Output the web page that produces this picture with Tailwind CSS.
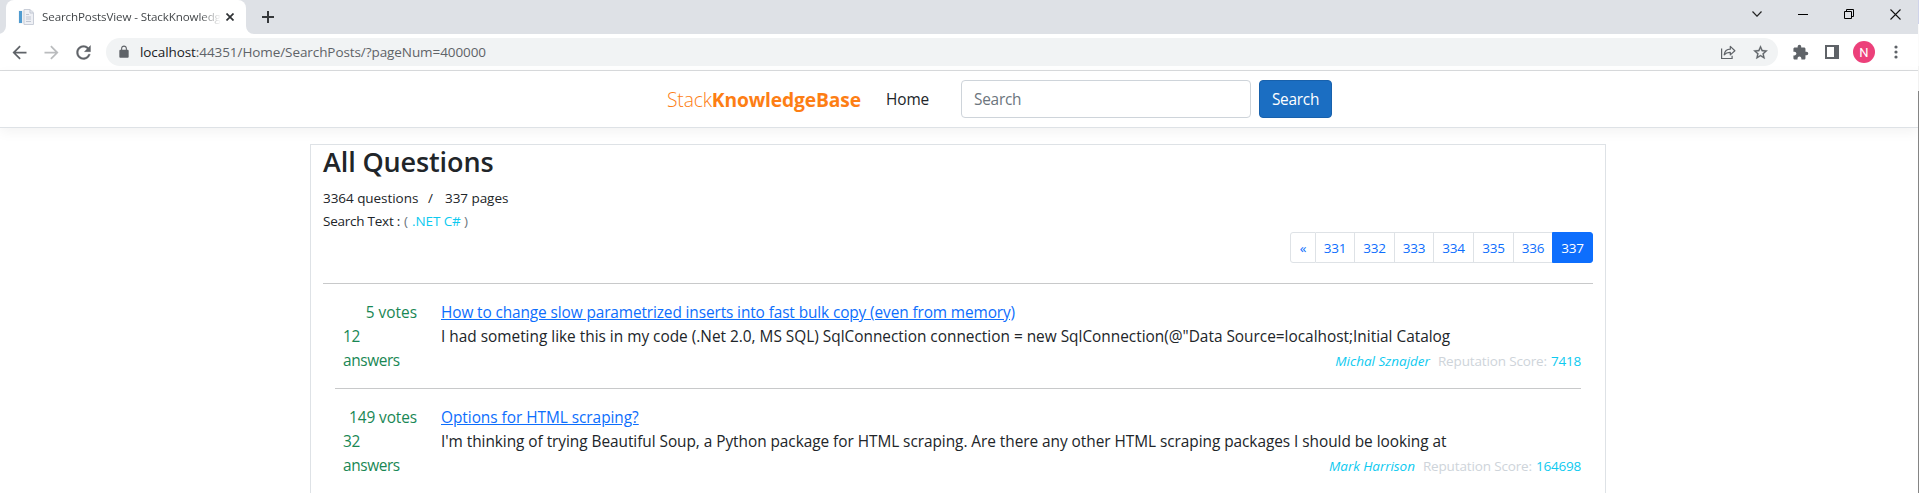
<!DOCTYPE html>
<html lang="en">
<head>
<meta charset="utf-8">
<title>SearchPostsView - StackKnowledgeBase</title>
<script src="https://cdn.jsdelivr.net/npm/@tailwindcss/browser@4"></script>
</head>
<body class="bg-white font-['Open_Sans','Noto_Sans',sans-serif] text-[15.4px] leading-6 text-[#212529]">
<div class="relative flex h-[493px] w-[1919px] flex-col overflow-hidden pr-px">

  <!-- Tab strip -->
  <div class="flex h-[34px] shrink-0 bg-[#dee1e6] pl-[6px]">
    <div class="relative flex w-[240px] items-center rounded-t-lg bg-white pl-3">
      <svg class="absolute -left-2 bottom-0 size-2" viewBox="0 0 8 8"><path d="M8 0v8H0a8 8 0 0 0 8-8z" fill="#fff"/></svg>
      <svg class="absolute -right-2 bottom-0 size-2" viewBox="0 0 8 8"><path d="M0 0v8h8a8 8 0 0 1-8-8z" fill="#fff"/></svg>
      <svg class="size-4 shrink-0" viewBox="0 0 16 16">
        <rect x=".5" y="1.5" width="15" height="13" fill="#eceff3"/>
        <rect x="1" y="2" width="3" height="12" fill="#4f9bd0"/>
        <path d="M6 .5h6l3.500 3.500v11.500H6z" fill="#eef0f5" stroke="#c9ced8"/>
        <path d="M12 .5V4h3.500M8 5.500h3M8 8h5M8 10h5M8 12.500h5" fill="none" stroke="#c0c6d2"/>
      </svg>
      <span class="ml-2 bg-gradient-to-r from-[#3c4043] from-88% to-[#3c4043]/0 bg-clip-text text-[11.6px] leading-4 tracking-[-0.12px] whitespace-nowrap text-transparent">SearchPostsView - StackKnowledg</span>
      <svg class="absolute top-[13px] left-[220px] size-2" viewBox="0 0 8 8"><path d="M.5.500l7 7M7.500.500l-7 7" stroke="#2f3235" stroke-width="1.700"/></svg>
    </div>
    <svg class="mt-[11px] ml-4 size-3" viewBox="0 0 12 12"><path d="M6 0v12M0 6h12" stroke="#35383b" stroke-width="2"/></svg>
    <div class="ml-auto flex h-7">
      <div class="flex w-[46px] items-center justify-center"><svg class="h-[6px] w-[10px]" viewBox="0 0 10 6"><path d="M.5.500L5 5.200 9.500.500" fill="none" stroke="#222" stroke-width="1.200"/></svg></div>
      <div class="flex w-[46px] items-center justify-center pt-px"><div class="h-px w-[10px] bg-black"></div></div>
      <div class="flex w-[46px] items-center justify-center"><svg class="size-[10px]" viewBox="0 0 10 10"><path d="M.5 2.500h7v7h-7zM2.500 2.500v-2h7v7h-2" fill="none" stroke="#000"/></svg></div>
      <div class="flex w-[46px] items-center justify-center"><svg class="size-[11px]" viewBox="0 0 11 11"><path d="M.5.500l10 10M10.500.500l-10 10" stroke="#111" stroke-width="1.100"/></svg></div>
    </div>
  </div>

  <!-- Toolbar -->
  <div class="flex h-[37px] shrink-0 items-center border-b border-[#d9dbdd] bg-white pl-1 text-[#5f6368]">
    <div class="flex w-8 justify-center pr-px"><svg class="size-[21px]" viewBox="0 0 24 24" fill="currentColor"><path d="M20 11H7.830l5.590-5.590L12 4l-8 8 8 8 1.410-1.410L7.830 13H20v-2z"/></svg></div>
    <div class="flex w-8 justify-center pr-px text-[#babcbe]"><svg class="size-[21px]" viewBox="0 0 24 24" fill="currentColor"><path d="M12 4l-1.410 1.410L16.170 11H4v2h12.170l-5.580 5.590L12 20l8-8z"/></svg></div>
    <div class="flex w-8 justify-center pr-px"><svg class="size-[21px]" viewBox="0 0 24 24" fill="currentColor" stroke="currentColor" stroke-width=".4"><path d="M17.650 6.350C16.200 4.900 14.210 4 12 4c-4.420 0-7.990 3.580-7.990 8s3.570 8 7.990 8c3.730 0 6.840-2.550 7.730-6h-2.080c-.82 2.330-3.040 4-5.650 4-3.310 0-6-2.690-6-6s2.690-6 6-6c1.660 0 3.140.69 4.220 1.780L13 11h7V4l-2.350 2.350z"/></svg></div>
    <div class="ml-[6px] flex h-7 w-[1672px] items-center rounded-full bg-[#f1f3f4] pl-[11px]">
      <svg class="size-[14px]" viewBox="0 0 24 24" fill="currentColor"><path d="M18 8h-1V6c0-2.760-2.240-5-5-5S7 3.240 7 6v2H6c-1.100 0-2 .9-2 2v10c0 1.100.9 2 2 2h12c1.100 0 2-.9 2-2V10c0-1.100-.9-2-2-2zm-2.900 0H8.900V6c0-1.710 1.390-3.100 3.100-3.100s3.100 1.390 3.100 3.100v2z"/></svg>
      <span class="ml-[9px] text-[13.5px] leading-5 tracking-[-0.08px] whitespace-nowrap"><span class="text-[#202124]">localhost</span>:44351/Home/SearchPosts/?pageNum=400000</span>
      <div class="ml-auto flex w-8 justify-center"><svg class="size-4" viewBox="0 0 16 16" fill="none" stroke="currentColor" stroke-width="1.200"><path d="M1.600 4.500v10h10.500v-2.800"/><path d="M4.200 10.800c.5-3.800 2.300-5.500 6.100-5.600V2.400l4.600 4.300-4.600 4.200V8.300C7.600 8.200 5.800 8.900 4.200 10.800z" stroke-linejoin="round"/></svg></div>
      <div class="mr-[2px] flex w-8 justify-center"><svg class="size-[17px]" viewBox="0 0 24 24" fill="currentColor" stroke="currentColor" stroke-width=".4"><path d="M22 9.240l-7.190-.62L12 2 9.190 8.630 2 9.240l5.460 4.730L5.820 21 12 17.270 18.180 21l-1.630-7.030L22 9.240zM12 15.400l-3.760 2.270 1-4.280-3.320-2.880 4.380-.38L12 6.100l1.710 4.040 4.380.38-3.320 2.880 1 4.280L12 15.400z"/></svg></div>
    </div>
    <div class="ml-[6px] flex w-8 justify-center"><svg class="size-[17px]" viewBox="0 0 24 24" fill="currentColor"><path d="M20.500 11H19V7c0-1.100-.9-2-2-2h-4V3.500a2.500 2.500 0 0 0-5 0V5H4c-1.100 0-1.990.9-1.990 2v3.800H3.500c1.490 0 2.700 1.210 2.700 2.700s-1.210 2.700-2.700 2.700H2V20c0 1.100.9 2 2 2h3.800v-1.500c0-1.490 1.210-2.700 2.700-2.700s2.700 1.210 2.700 2.700V22H17c1.100 0 2-.9 2-2v-4h1.500a2.500 2.500 0 0 0 0-5z"/></svg></div>
    <div class="flex w-8 justify-center"><svg class="size-[14px]" viewBox="0 0 14 14"><path fill="currentColor" fill-rule="evenodd" d="M0 0h14v14H0zM2 2v10h7V2z"/></svg></div>
    <div class="flex w-8 justify-center"><div class="flex size-[22px] items-center justify-center rounded-full bg-[#ec407a] font-[Roboto,sans-serif] text-[13px] leading-none text-white">N</div></div>
    <div class="flex w-8 justify-center"><svg class="h-[14px] w-[4px]" viewBox="0 0 4 14" fill="currentColor"><circle cx="2" cy="2" r="1.600"/><circle cx="2" cy="7" r="1.600"/><circle cx="2" cy="12" r="1.600"/></svg></div>
  </div>

  <!-- Site navbar -->
  <nav class="flex h-[57px] shrink-0 items-center border-b border-[#dee2e6] bg-white pl-[667px] whitespace-nowrap shadow-[0_4px_12px_rgba(0,0,0,0.05)]">
    <div class="w-[219px] pt-[2px] text-[19.25px] tracking-[-0.15px] text-[#fd7e14]"><span class="font-light">Stack</span><span class="font-bold">KnowledgeBase</span></div>
    <a class="w-[75px] pt-[2px] tracking-[-0.1px]">Home</a>
    <div class="flex h-[38px] w-[290px] items-center rounded border border-[#ced4da] px-3 pt-[2px] tracking-[-0.25px] text-[#6c757d]">Search</div>
    <div class="ml-2 flex h-[38px] w-[73px] items-center justify-center rounded border border-[#1861ac] bg-[#1b6ec2] pt-[2px] tracking-[-0.25px] text-white">Search</div>
  </nav>

  <!-- Questions -->
  <main class="mt-4 ml-[310px] flex w-[1296px] grow flex-col border border-b-0 border-[#dee2e6] px-3 whitespace-nowrap">
    <h1 class="text-[27px] leading-[34px] font-semibold tracking-[-0.12px]">All Questions</h1>
    <div class="mt-2 flex text-[13.5px] leading-[23px] tracking-[-0.05px]"><span class="w-[105px]">3364 questions</span><span class="w-[17px]">/</span><span>337 pages</span></div>
    <div class="flex gap-1 text-[13.5px] leading-[23px]"><span class="w-[77px] tracking-[-0.24px]">Search Text :</span><span class="text-[#6c757d]">(</span><span class="w-[48px] tracking-[-0.1px] text-[#0dcaf0]">.NET C#</span><span class="text-[#6c757d]">)</span></div>
    <div class="-mt-px flex h-[31px] self-end text-center text-[13.5px] leading-[30px] tracking-[-0.15px] text-[#0d6efd]">
      <a class="w-[26px] rounded-l-[3px] border border-[#dee2e6]">«</a>
      <a class="w-[39px] border-y border-r border-[#dee2e6]">331</a>
      <a class="w-[40px] border-y border-r border-[#dee2e6]">332</a>
      <a class="w-[39px] border-y border-r border-[#dee2e6]">333</a>
      <a class="w-[40px] border-y border-r border-[#dee2e6]">334</a>
      <a class="w-[40px] border-y border-r border-[#dee2e6]">335</a>
      <a class="w-[38px] border-y border-[#dee2e6]">336</a>
      <a class="w-[41px] rounded-r-[3px] border border-[#0d6efd] bg-[#0d6efd] text-white">337</a>
    </div>
    <hr class="mt-5 border-[#c8c9ca]">
    <section class="mx-3 mt-[17px] flex">
      <div class="w-[106px] pr-6 pl-2 text-[#198754]">
        <div class="text-right">5 votes</div>
        <div class="tracking-[-0.4px]">12<br>answers</div>
      </div>
      <div class="grow">
        <a class="block tracking-[-0.11px] text-[#0d6efd] underline">How to change slow parametrized inserts into fast bulk copy (even from memory)</a>
        <p class="tracking-[-0.006px]">I had someting like this in my code (.Net 2.0, MS SQL) SqlConnection connection = new SqlConnection(@"Data Source=localhost;Initial Catalog</p>
        <p class="text-right"><span class="text-[13.5px] text-[#0dcaf0] italic">Michal Sznajder</span><span class="ml-2 text-[13.5px] tracking-[-0.15px] text-[#ced4da]">Reputation Score:</span><span class="ml-1 text-[13.5px] tracking-[-0.2px] text-[#0dcaf0]">7418</span></p>
      </div>
    </section>
    <hr class="mx-3 mt-[15px] border-[#c8c9ca]">
    <section class="mx-3 mt-[17px] flex">
      <div class="w-[106px] pr-6 pl-2 text-[#198754]">
        <div class="text-right tracking-[-0.1px]">149 votes</div>
        <div class="tracking-[-0.4px]">32<br>answers</div>
      </div>
      <div class="grow">
        <a class="block tracking-[-0.03px] text-[#0d6efd] underline">Options for HTML scraping?</a>
        <p class="tracking-[-0.045px]">I'm thinking of trying Beautiful Soup, a Python package for HTML scraping. Are there any other HTML scraping packages I should be looking at</p>
        <p class="text-right"><span class="text-[13.5px] tracking-[-0.05px] text-[#0dcaf0] italic">Mark Harrison</span><span class="ml-2 text-[13.5px] tracking-[-0.15px] text-[#ced4da]">Reputation Score:</span><span class="ml-1 text-[13.5px] tracking-[-0.2px] text-[#0dcaf0]">164698</span></p>
      </div>
    </section>
  </main>

  <!-- Sliver at the window's right edge -->
  <div class="absolute inset-y-0 right-0 flex w-px flex-col">
    <div class="h-6 bg-[#cfd3ea]"></div>
    <div class="h-[42px] bg-[#fafafa]"></div>
    <div class="h-[25px] bg-[#f1f1f1]"></div>
    <div class="grow bg-[#858585]"></div>
  </div>
</div>
</body>
</html>
